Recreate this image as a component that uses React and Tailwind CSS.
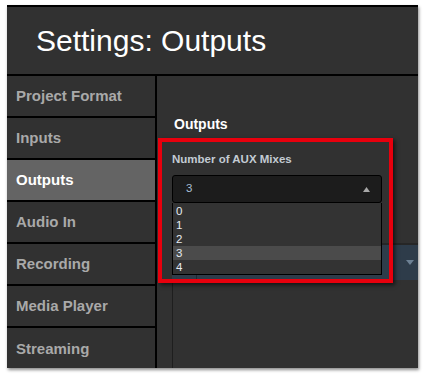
export default function App() {
  const items = ["Project Format", "Inputs", "Outputs", "Audio In", "Recording", "Media Player", "Streaming"];
  return (
    <div className="w-[425px] h-[376px] bg-white pt-[5px] pl-[7px]" style={{ fontFamily: '"Liberation Sans", Arial, sans-serif' }}>
      <div className="w-[411px] h-[363px] bg-[#313131] border-t-2 border-black flex flex-col shadow-[1px_2px_3px_rgba(0,0,0,0.45)]">
        <div className="h-[69px] shrink-0 flex items-center pl-[29px] border-b-2 border-black">
          <span className="text-[30px] leading-[34px] text-white">Settings: Outputs</span>
        </div>
        <div className="flex flex-1 min-h-0">
          <div className="w-[150px] shrink-0 border-r-2 border-black flex flex-col">
            {items.map((it, i) => (
              <div
                key={it}
                className={
                  "h-[42px] shrink-0 flex items-center pl-[9px] text-[15px] font-bold " +
                  (i < items.length - 1 ? "border-b-2 border-black " : "") +
                  (it === "Outputs" ? "bg-[#646464] text-white" : "text-[#a9a9a9]")
                }
              >
                {it}
              </div>
            ))}
          </div>
          <div className="flex-1 relative flex flex-col">
            <div className="pl-[17px] pt-[40px] text-[14px] leading-[16px] font-bold text-white">Outputs</div>
            <div className="pl-[15px] mt-[20px] text-[11.5px] leading-[14px] font-bold text-[#c3cbd3]">Number of AUX Mixes</div>
            <div className="ml-[15px] mt-[9px] w-[210px] h-[28px] bg-[#1c1c1c] border border-black rounded-[3px] flex items-center justify-between pl-[13px] pr-[11px]">
              <span className="text-[11.5px] text-[#a9bfd4]">3</span>
              <svg width="7" height="5" viewBox="0 0 7 5"><path d="M0 5 L3.5 0 L7 5 Z" fill="#a8a8a8" /></svg>
            </div>
            <div className="ml-[15px] mt-[40px] h-[37px] bg-[#2e3c4a] border-t-2 border-[#262626] flex">
              <div className="w-[25px] border-r border-[#1f2a35]"></div>
              <div className="flex-1 flex items-center justify-end pr-[4px]">
                <svg width="8" height="5" viewBox="0 0 8 5"><path d="M0 0 L4 5 L8 0 Z" fill="#6d8194" /></svg>
              </div>
            </div>
            <div className="flex-1 ml-[15px] border-l border-[#1e1e1e]"></div>

            <div className="absolute left-[15px] top-[127px] w-[210px] h-[72px] bg-[#333333] border border-t-0 border-black flex flex-col pt-[1px] text-[11.5px] text-[#e6ecf2]">
              {["0", "1", "2", "3", "4"].map((n) => (
                <div key={n} className={"h-[14px] leading-[14px] pl-[3px] " + (n === "3" ? "bg-[#4b4b4b]" : "")}>{n}</div>
              ))}
            </div>
            <div className="absolute left-[1px] top-[62px] w-[235px] h-[145px] border-4 border-[#e8000d] shadow-[2px_2px_4px_rgba(0,0,0,0.6)]"></div>
          </div>
        </div>
      </div>
    </div>
  );
}
